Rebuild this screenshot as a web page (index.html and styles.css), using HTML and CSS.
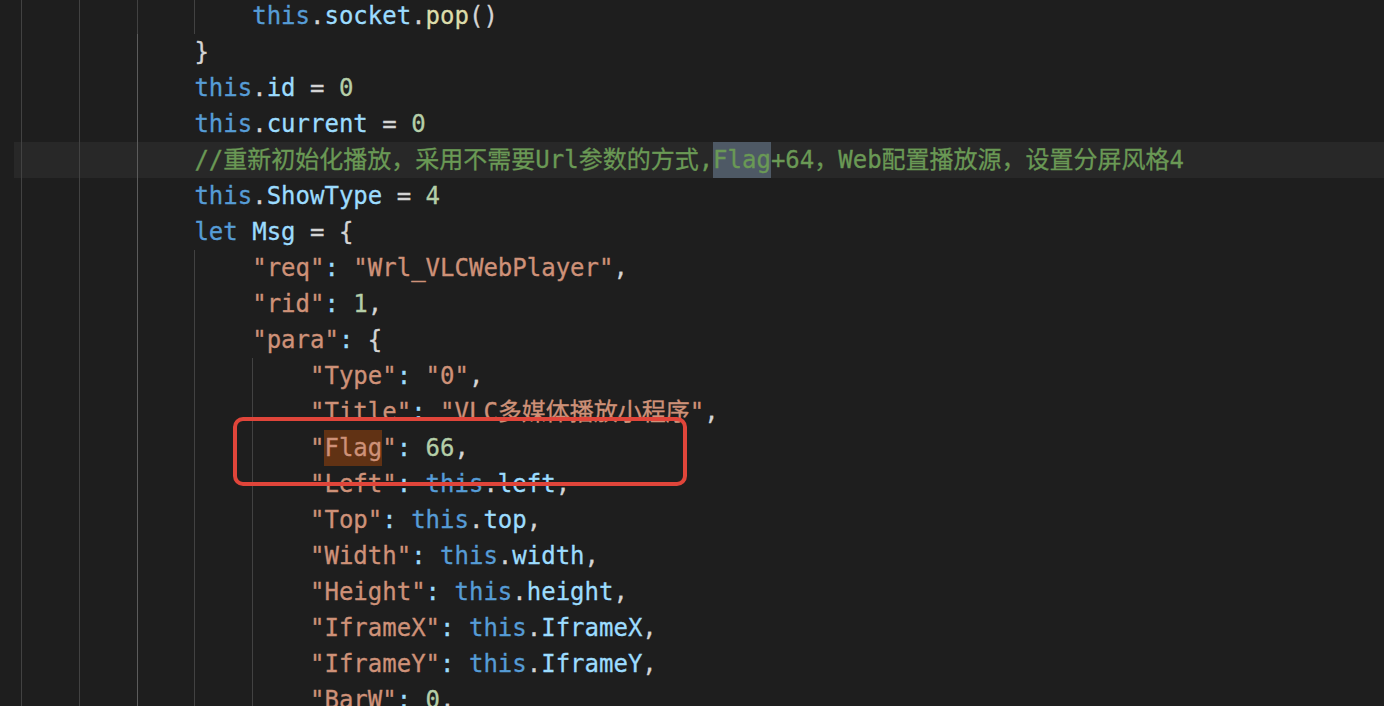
FILE: index.html
```html
<!DOCTYPE html>
<html lang="zh-CN">
<head>
  <meta charset="UTF-8">
  <meta name="viewport" content="width=device-width, initial-scale=1.0">
  <title>editor</title>
  <link rel="stylesheet" href="styles.css">
</head>
<body>

  <div class="editor">
    <div class="line"><span class="ind"></span><span class="ind"></span><span class="ind"></span><span class="ind"></span><span class="kw">this</span><span class="pn">.</span><span class="pr">socket</span><span class="pn">.</span><span class="fn">pop</span><span class="pn">()</span></div>
    <div class="line"><span class="ind"></span><span class="ind"></span><span class="ind active"></span><span class="pn">}</span></div>
    <div class="line"><span class="ind"></span><span class="ind"></span><span class="ind active"></span><span class="kw">this</span><span class="pn">.</span><span class="pr">id</span><span class="pn"> = </span><span class="nm">0</span></div>
    <div class="line"><span class="ind"></span><span class="ind"></span><span class="ind active"></span><span class="kw">this</span><span class="pn">.</span><span class="pr">current</span><span class="pn"> = </span><span class="nm">0</span></div>
    <!-- 当前行 -->
    <div class="line current"><span class="ind"></span><span class="ind"></span><span class="ind active"></span><span class="cm">//重新初始化播放，采用不需要Url参数的方式,<span class="match">Flag</span>+64，Web配置播放源，设置分屏风格4</span></div>
    <div class="line"><span class="ind"></span><span class="ind"></span><span class="ind active"></span><span class="kw">this</span><span class="pn">.</span><span class="pr">ShowType</span><span class="pn"> = </span><span class="nm">4</span></div>
    <div class="line"><span class="ind"></span><span class="ind"></span><span class="ind active"></span><span class="kw">let</span> <span class="pr">Msg</span><span class="pn"> = {</span></div>
    <div class="line"><span class="ind"></span><span class="ind"></span><span class="ind active"></span><span class="ind"></span><span class="st">"req"</span><span class="pr">:</span> <span class="st">"Wrl_VLCWebPlayer"</span><span class="pn">,</span></div>
    <div class="line"><span class="ind"></span><span class="ind"></span><span class="ind active"></span><span class="ind"></span><span class="st">"rid"</span><span class="pr">:</span> <span class="nm">1</span><span class="pn">,</span></div>
    <div class="line"><span class="ind"></span><span class="ind"></span><span class="ind active"></span><span class="ind"></span><span class="st">"para"</span><span class="pr">:</span> <span class="pn">{</span></div>
    <div class="line"><span class="ind"></span><span class="ind"></span><span class="ind active"></span><span class="ind"></span><span class="ind"></span><span class="st">"Type"</span><span class="pr">:</span> <span class="st">"0"</span><span class="pn">,</span></div>
    <div class="line"><span class="ind"></span><span class="ind"></span><span class="ind active"></span><span class="ind"></span><span class="ind"></span><span class="st">"Title"</span><span class="pr">:</span> <span class="st">"VLC多媒体播放小程序"</span><span class="pn">,</span></div>
    <div class="line"><span class="ind"></span><span class="ind"></span><span class="ind active"></span><span class="ind"></span><span class="ind"></span><span class="st">"<span class="found">Flag</span>"</span><span class="pr">:</span> <span class="nm">66</span><span class="pn">,</span></div>
    <div class="line"><span class="ind"></span><span class="ind"></span><span class="ind active"></span><span class="ind"></span><span class="ind"></span><span class="st">"Left"</span><span class="pr">:</span> <span class="kw">this</span><span class="pn">.</span><span class="pr">left</span><span class="pn">,</span></div>
    <div class="line"><span class="ind"></span><span class="ind"></span><span class="ind active"></span><span class="ind"></span><span class="ind"></span><span class="st">"Top"</span><span class="pr">:</span> <span class="kw">this</span><span class="pn">.</span><span class="pr">top</span><span class="pn">,</span></div>
    <div class="line"><span class="ind"></span><span class="ind"></span><span class="ind active"></span><span class="ind"></span><span class="ind"></span><span class="st">"Width"</span><span class="pr">:</span> <span class="kw">this</span><span class="pn">.</span><span class="pr">width</span><span class="pn">,</span></div>
    <div class="line"><span class="ind"></span><span class="ind"></span><span class="ind active"></span><span class="ind"></span><span class="ind"></span><span class="st">"Height"</span><span class="pr">:</span> <span class="kw">this</span><span class="pn">.</span><span class="pr">height</span><span class="pn">,</span></div>
    <div class="line"><span class="ind"></span><span class="ind"></span><span class="ind active"></span><span class="ind"></span><span class="ind"></span><span class="st">"IframeX"</span><span class="pr">:</span> <span class="kw">this</span><span class="pn">.</span><span class="pr">IframeX</span><span class="pn">,</span></div>
    <div class="line"><span class="ind"></span><span class="ind"></span><span class="ind active"></span><span class="ind"></span><span class="ind"></span><span class="st">"IframeY"</span><span class="pr">:</span> <span class="kw">this</span><span class="pn">.</span><span class="pr">IframeY</span><span class="pn">,</span></div>
    <div class="line"><span class="ind"></span><span class="ind"></span><span class="ind active"></span><span class="ind"></span><span class="ind"></span><span class="st">"BarW"</span><span class="pr">:</span> <span class="nm">0</span><span class="pn">,</span></div>

    <!-- 红框标注 -->
    <div class="mark"></div>
  </div>

</body>
</html>
```

FILE: styles.css
```css
html, body {
  margin: 0;
  padding: 0;
  background-color: #1e1e1e;
  overflow: hidden;
}

.editor {
  position: relative;
  margin-top: -2px;
  padding-left: 14px;
  font-family: "DejaVu Sans Mono", "Noto Sans CJK SC", monospace;
  font-size: 24px;
  line-height: 36px;
  color: #d4d4d4;
  -webkit-text-stroke: 0.3px currentColor;
}

.line {
  height: 36px;
  padding-left: 7px;
  white-space: pre;
}

.line.current {
  background-color: #282828;
}

.ind {
  display: inline-block;
  vertical-align: top;
  width: 4ch;
  height: 36px;
  box-shadow: inset 1px 0 #424242;
}

.ind.active {
  box-shadow: inset 1px 0 #5c5c5c;
}

.kw { color: #569cd6; }
.pr { color: #9cdcfe; }
.fn { color: #dcdcaa; }
.nm { color: #b5cea8; }
.st { color: #ce9178; }
.cm { color: #6a9955; }
.pn { color: #d4d4d4; }

.match {
  display: inline-block;
  vertical-align: top;
  background-color: #4e5965;
}

.found {
  display: inline-block;
  vertical-align: top;
  background-color: #613214;
}

.mark {
  position: absolute;
  left: 233px;
  top: 419px;
  width: 454px;
  height: 69px;
  box-sizing: border-box;
  border: 4px solid #e0453a;
  border-radius: 10px;
}
```
